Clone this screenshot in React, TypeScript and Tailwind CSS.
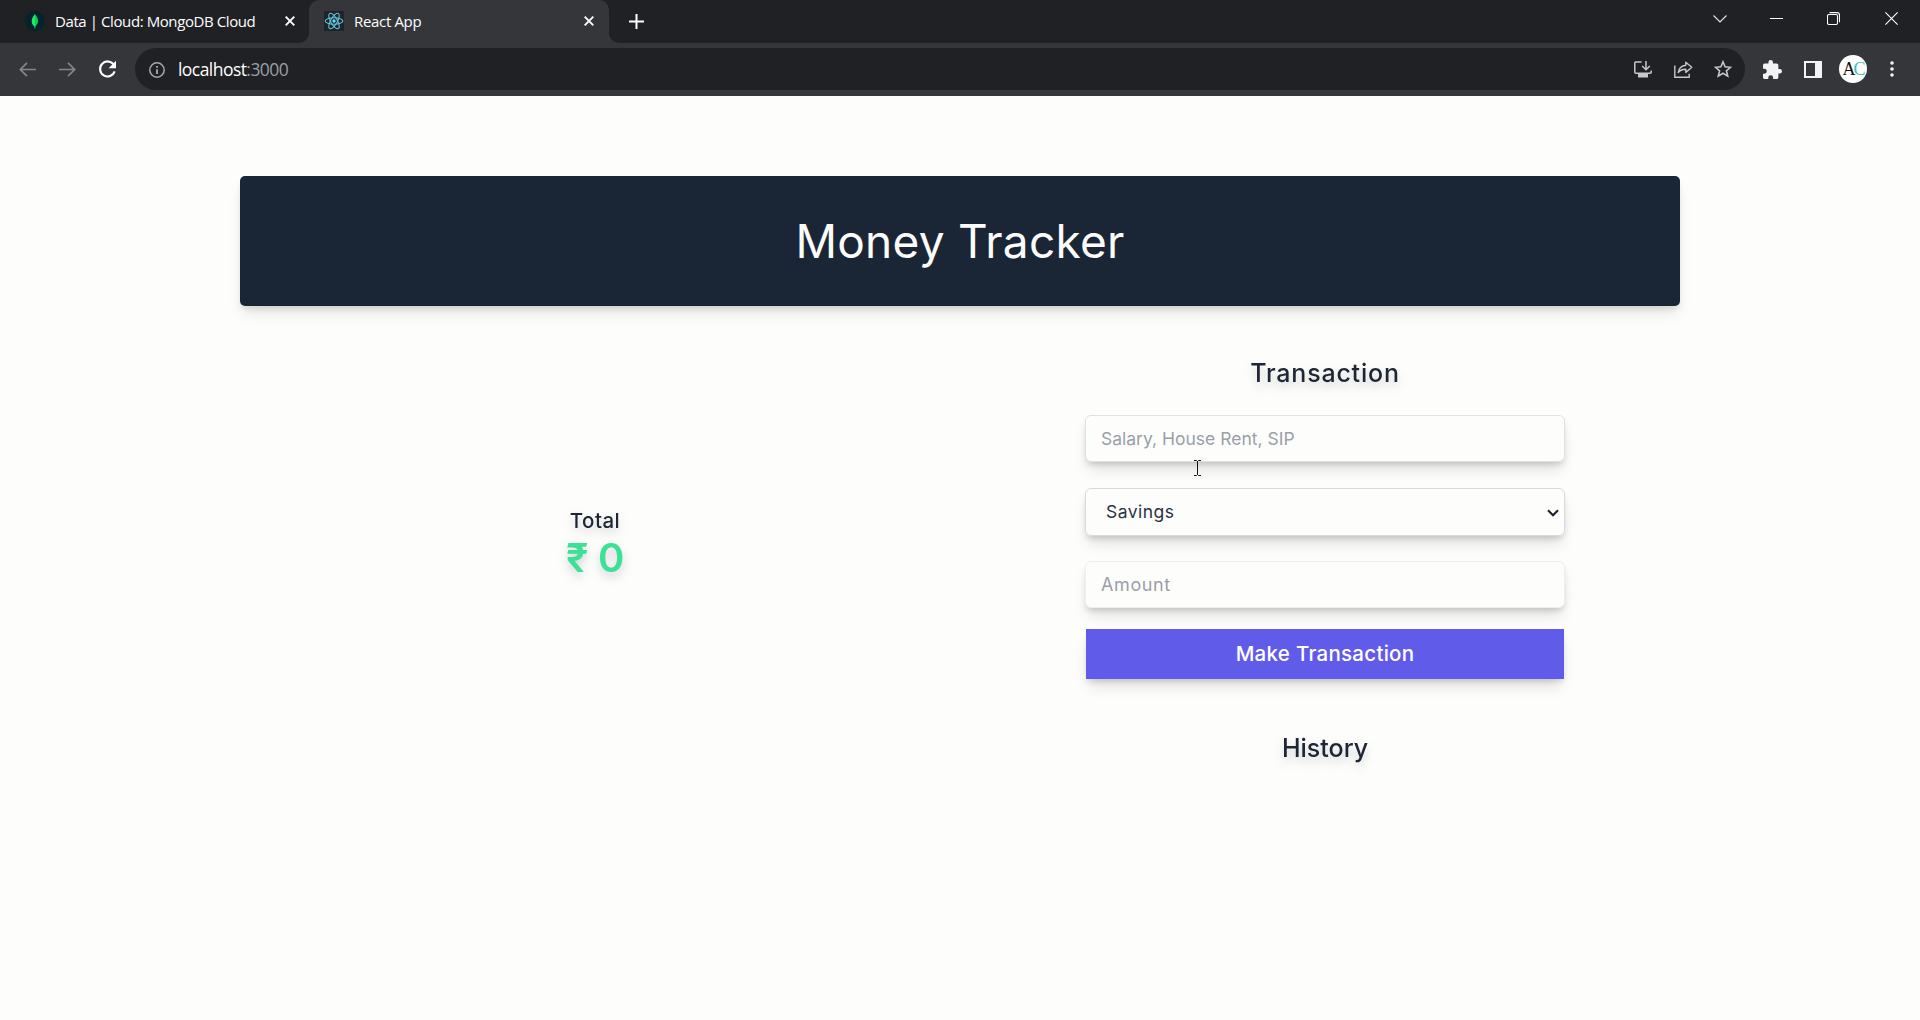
import type { ReactNode } from "react";

function MongoIcon() {
  return (
    <svg className="size-5 shrink-0" viewBox="0 0 20 20">
      <circle cx="10" cy="10" r="10" fill="#06222c" />
      <path d="M10 3.200C12.400 6 13.300 8 13.100 10.600c-.2 2.200-1.500 3.700-2.700 4.700L10.200 17.500h-.5L9.500 15.300C8 14.200 6.900 12.600 6.800 10.500 6.700 8 7.800 6 10 3.200Z" fill="#13c950" />
      <path d="M10 3.200C7.800 6 6.700 8 6.800 10.500c.1 2.100 1.200 3.700 2.700 4.800l.2 2.200h.4Z" fill="#18ec68" />
    </svg>
  );
}

function ReactIcon() {
  return (
    <svg className="size-5 shrink-0" viewBox="0 0 20 20">
      <rect width="20" height="20" fill="#202327" />
      <g fill="none" stroke="#61c5dd" strokeWidth="1.1">
        <ellipse cx="10" cy="10" rx="8.800" ry="3.300" />
        <ellipse cx="10" cy="10" rx="8.800" ry="3.300" transform="rotate(60 10 10)" />
        <ellipse cx="10" cy="10" rx="8.800" ry="3.300" transform="rotate(120 10 10)" />
      </g>
      <circle cx="10" cy="10" r="1.700" fill="#61dafb" />
    </svg>
  );
}

function CloseIcon() {
  return (
    <svg className="size-[10px] shrink-0" viewBox="0 0 10 10" stroke="#fff" strokeWidth="1.900">
      <path d="M.7.7 9.300 9.300M9.300.7.7 9.300" />
    </svg>
  );
}

function TabStrip() {
  return (
    <div className="flex h-[43px] bg-[#202124] text-[15px] text-white">
      <div className="flex h-[42px] w-[309px] shrink-0 items-center pl-[25px] pr-[14px]">
        <MongoIcon />
        <span className="ml-[10px] flex-1 whitespace-nowrap tracking-[-0.41px]">Data | Cloud: MongoDB Cloud</span>
        <CloseIcon />
      </div>
      <div className="relative flex h-[43px] w-[300px] shrink-0 items-center rounded-t-[10px] bg-[#35363a] pb-px pl-[15px] pr-[15px]">
        <svg className="absolute bottom-0 -left-[10px] size-[10px]" viewBox="0 0 10 10">
          <path d="M10 0v10H0A10 10 0 0 0 10 0Z" fill="#35363a" />
        </svg>
        <ReactIcon />
        <span className="ml-[10px] flex-1 whitespace-nowrap tracking-[-0.33px]">React App</span>
        <CloseIcon />
        <svg className="absolute bottom-0 -right-[10px] size-[10px]" viewBox="0 0 10 10">
          <path d="M0 0v10h10A10 10 0 0 1 0 0Z" fill="#35363a" />
        </svg>
      </div>
      <div className="flex h-[42px] flex-1 items-center pl-5">
        <svg className="size-[15px]" viewBox="0 0 15 15" stroke="#fff" strokeWidth="2">
          <path d="M7.500 0v15M0 7.500h15" />
        </svg>
      </div>
      <div className="flex h-[37px] items-center pr-[22px]">
        <svg className="h-[8px] w-[14px]" viewBox="0 0 14 8" fill="none" stroke="#e8e8e8" strokeWidth="1.100">
          <path d="m.5.500 6.500 6.500L13.500.500" />
        </svg>
        <svg className="ml-[43px] h-px w-[13px]" viewBox="0 0 13 1">
          <path d="M0 0h13v1H0z" fill="#fff" />
        </svg>
        <svg className="ml-[44px] size-[13px]" viewBox="0 0 13 13" fill="none" stroke="#fff" strokeWidth="1.100">
          <rect x=".5" y="2.500" width="10" height="10" rx="1.500" />
          <path d="M2.500.600h7.500a2.500 2.500 0 0 1 2.500 2.500v7.200" />
        </svg>
        <svg className="ml-[45px] size-[13px]" viewBox="0 0 13 13" stroke="#fff" strokeWidth="1.100">
          <path d="m.4.400 12.200 12.200M12.600.400.400 12.600" />
        </svg>
      </div>
    </div>
  );
}

function Toolbar() {
  return (
    <div className="flex h-[53px] items-center bg-[#35363a] pb-px pl-[19px] pr-[26px]">
      <svg className="h-[15px] w-[17px]" viewBox="0 0 17 15" fill="none" stroke="#85868a" strokeWidth="1.700">
        <path d="M17 7.500H1.500M8 .8 1.300 7.500 8 14.200" />
      </svg>
      <svg className="ml-[23px] h-[15px] w-[17px]" viewBox="0 0 17 15" fill="none" stroke="#85868a" strokeWidth="1.700">
        <path d="M0 7.500h15.500M9 .8l6.700 6.700L9 14.200" />
      </svg>
      <svg className="ml-[22px] size-[19px]" viewBox="0 0 19 19" fill="none" stroke="#fff" strokeWidth="2.100">
        <path d="M15.600 4.400A7.500 7.500 0 1 0 16.700 11.400" />
        <path d="M18 .8v7.400h-7.400Z" fill="#fff" stroke="none" />
      </svg>
      <div className="ml-[18px] flex h-[42px] flex-1 items-center rounded-full bg-[#202124] pl-[14px] pr-[13px]">
        <svg className="mt-px size-4" viewBox="0 0 16 16" fill="none" stroke="#a7a9ad" strokeWidth="1.500">
          <circle cx="8" cy="8" r="7.200" />
          <path d="M8 7.200V12M8 4v1.700" strokeWidth="1.800" />
        </svg>
        <span className="ml-[13px] pt-[2px] text-[17.5px] leading-none text-white tracking-[-0.55px]">
          localhost<span className="text-[#9aa0a6]">:3000</span>
        </span>
        <div className="ml-auto flex items-center">
          <svg className="h-[17px] w-[18px]" viewBox="0 0 18 17" fill="none" stroke="#c4c7cb" strokeWidth="1.500">
            <path d="M7.500 1H1.700Q.8 1 .8 2v9.200q0 1 1 1h14.400q1 0 1-1V9.500M12 0v8.500M8.200 5 12 8.800 15.800 5" />
            <path d="M4 13h10v3.500H4z" fill="#c4c7cb" stroke="none" />
          </svg>
          <svg className="ml-[22px] h-[17px] w-[19px]" viewBox="0 0 19 17" fill="none" stroke="#c4c7cb" strokeWidth="1.400">
            <path d="M.8 4.500v11.700h14.400v-3.400" />
            <path d="M11.800 1.200 17.800 6.300l-6 5.100V8.300c-3.500 0-5.700 1-7.600 3.200.6-3.900 3-6.600 7.600-7.200Z" strokeLinejoin="round" />
          </svg>
          <svg className="ml-[21px] size-[18px]" viewBox="0 0 18 18" fill="none" stroke="#c4c7cb" strokeWidth="1.600">
            <path d="m9 1.800 2.100 5 5.400.5-4.100 3.500 1.300 5.300L9 13.300l-4.700 2.800 1.300-5.300L1.500 7.300l5.400-.5Z" />
          </svg>
        </div>
      </div>
      <svg className="ml-[18px] size-[19px]" viewBox="2 1 21 21" fill="#f1f3f4">
        <path d="M20.500 11H19V7c0-1.100-.9-2-2-2h-4V3.500a2.500 2.500 0 0 0-5 0V5H4c-1.100 0-2 .9-2 2v3.800h1.500a2.700 2.700 0 0 1 0 5.400H2V20c0 1.100.9 2 2 2h3.800v-1.500a2.700 2.700 0 0 1 5.400 0V22H17c1.100 0 2-.9 2-2v-4h1.500a2.500 2.500 0 0 0 0-5Z" />
      </svg>
      <svg className="ml-[22px] h-[17px] w-[18px]" viewBox="0 0 18 17">
        <rect x="1" y="1" width="16" height="15" fill="none" stroke="#f1f3f4" strokeWidth="2" />
        <path d="M11 0h7v17h-7z" fill="#f1f3f4" />
      </svg>
      <div className="ml-[17px] flex size-[28px] items-center justify-center rounded-full bg-white font-['Liberation_Serif'] text-[18px] leading-none tracking-[-2px] text-[#111]">
        A<span className="text-[#3dbdbb]">C</span>
      </div>
      <svg className="ml-[23px] h-[16px] w-[4px]" viewBox="0 0 4 16" fill="#f1f3f4">
        <circle cx="2" cy="2" r="1.800" />
        <circle cx="2" cy="8" r="1.800" />
        <circle cx="2" cy="14" r="1.800" />
      </svg>
    </div>
  );
}

function Heading({ children }: { children: ReactNode }) {
  return <h2 className="text-center text-[25px] font-medium leading-[30px] drop-shadow-[0_5px_5px_rgba(80,80,120,0.25)]">{children}</h2>;
}

const fieldShadow = "shadow-[0_10px_15px_-3px_rgba(0,0,0,0.12),0_4px_6px_-2px_rgba(0,0,0,0.16)]";

function TransactionForm() {
  return (
    <form className="mx-auto w-[480px] text-[17.5px]">
      <input
        className={`block h-[47px] w-full rounded-md border border-[#e0e1e8] bg-[#fdfdfc] px-[15px] placeholder:text-[#9a9fa8] ${fieldShadow}`}
        placeholder="Salary, House Rent, SIP"
      />
      <div className={`relative mt-[26px] rounded-md ${fieldShadow}`}>
        <select className="block h-[48px] w-full appearance-none rounded-md border border-[#d8dae0] bg-[#fdfdfc] pl-[20px] tracking-[0.46px] text-[#2b333f]">
          <option>Savings</option>
          <option>Expense</option>
          <option>Investment</option>
        </select>
        <svg className="absolute right-[6px] top-[21px] h-[8px] w-[12px]" viewBox="0 0 12 8" fill="none" stroke="#1c2430" strokeWidth="2.200">
          <path d="m1 1.200 5 5 5-5" />
        </svg>
      </div>
      <input
        className={`mt-[25px] block h-[47px] w-full rounded-md border border-[#eeeef4] bg-[#fdfdfc] px-[15px] text-[18px] tracking-[0.6px] placeholder:text-[#9a9fa8] ${fieldShadow}`}
        placeholder="Amount"
      />
      <button
        type="button"
        className={`mx-px mt-[21px] block h-[50px] w-[478px] bg-[#615bea] text-[20.5px] font-medium tracking-[0.28px] text-white ${fieldShadow}`}
      >
        Make Transaction
      </button>
    </form>
  );
}

export default function App() {
  return (
    <div className="relative h-[1020px] w-full overflow-hidden bg-[#fdfdfb] font-['Open_Sans',sans-serif]">
      <TabStrip />
      <Toolbar />
      <main className="mx-auto w-[1440px] pt-20 font-[Inter,sans-serif] text-[#1c2634]">
        <h1 className="flex h-[130px] items-center justify-center rounded-[5px] bg-[#1a2636] text-[46px] tracking-[0.25px] text-[#fcfcfc] shadow-[0_10px_15px_-3px_rgba(0,0,0,0.1),0_4px_6px_-2px_rgba(0,0,0,0.12)]">
          Money Tracker
        </h1>
        <div className="grid grid-cols-2 gap-5">
          <section className="pt-[202px] text-center drop-shadow-[0_5px_5px_rgba(80,80,120,0.25)]">
            <h3 className="text-[20.5px] font-medium leading-[26px] tracking-[0.45px]">Total</h3>
            <p className="mt-[4px] text-[40px] font-semibold leading-[40px] tracking-[-0.27px] text-[#3de196]">₹ 0</p>
          </section>
          <section className="pt-[52px]">
            <div className="tracking-[0.79px]">
              <Heading>Transaction</Heading>
            </div>
            <div className="mt-[27px]">
              <TransactionForm />
            </div>
            <div className="mt-[54px]">
              <Heading>History</Heading>
            </div>
          </section>
        </div>
      </main>
      <svg className="absolute left-[1193px] top-[460px] h-[16px] w-[9px]" viewBox="0 0 9 16" fill="none" stroke="#111" strokeWidth="1">
        <path d="M1 .5h2.500l1 1 1-1H8M4.500 1v14M1 15.500h2.500l1-1 1 1H8" />
      </svg>
    </div>
  );
}
